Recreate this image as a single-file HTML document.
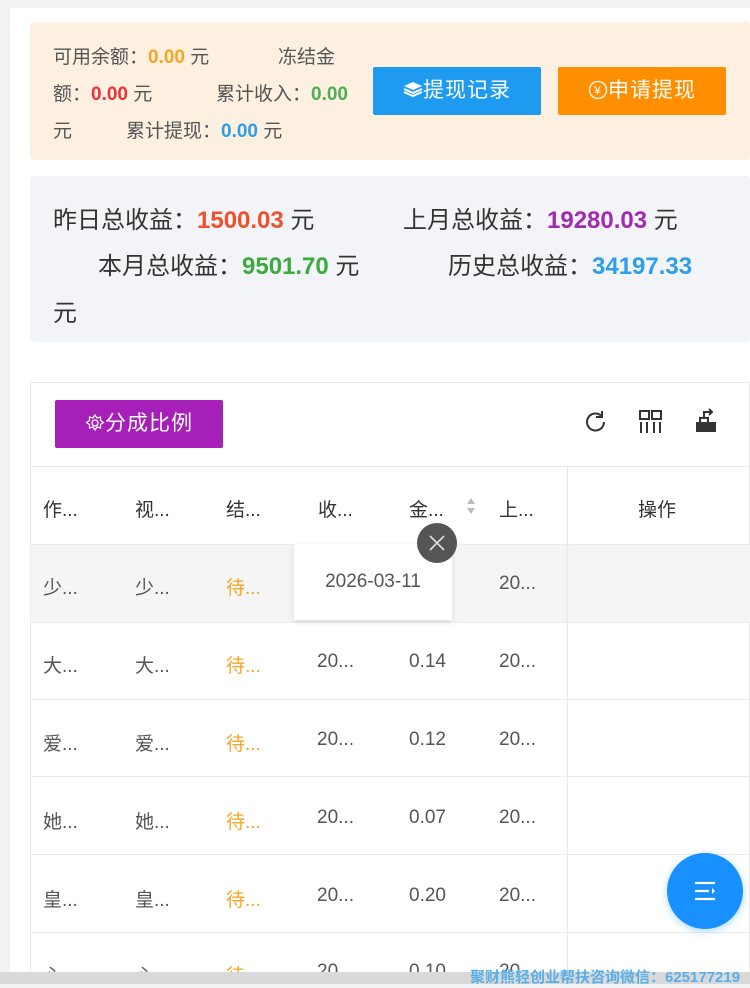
<!DOCTYPE html>
<html><head><meta charset="utf-8"><style>
*{margin:0;padding:0;box-sizing:border-box}
body{width:750px;height:984px;overflow:hidden;background:#f2f2f2;font-family:"Liberation Sans","Noto Sans CJK SC",sans-serif;position:relative;color:#333}
.a{position:absolute;white-space:nowrap}
.wrap{position:absolute;left:10px;top:8px;width:740px;height:976px;background:#fff}
.t{font-size:19px;color:#555}
.t span,.b span{font-weight:bold}
.b{font-size:24px;color:#333}
.c{font-size:19px;color:#555}
.h{font-size:19px;color:#333}
.o{color:#f5a623}
.line{position:absolute;left:32px;width:718px;height:1px;background:#ececec}
</style></head><body>
<div class="wrap"></div>
<div class="a" style="left:30px;top:22px;width:720px;height:138px;background:#fdf0e1;border-radius:4px"></div>
<div class="a t" style="left:53px;top:42px">可用余额：<span style="color:#f5a623">0.00</span> 元</div>
<div class="a t" style="left:278px;top:42px">冻结金</div>
<div class="a t" style="left:53px;top:79px">额：<span style="color:#e8333a">0.00</span> 元</div>
<div class="a t" style="left:216px;top:79px">累计收入：<span style="color:#4caf50">0.00</span></div>
<div class="a t" style="left:53px;top:116px">元</div>
<div class="a t" style="left:126px;top:116px">累计提现：<span style="color:#2d9ee8">0.00</span> 元</div>
<div class="a" style="left:373px;top:67px;width:168px;height:48px;background:#1e9bf0;color:#fff;font-size:21px;text-align:center;line-height:48px;border-radius:2px;letter-spacing:1px">
<svg width="20" height="18" viewBox="0 0 20 18" style="vertical-align:-2px"><path d="M10 1L19 5L10 9L1 5Z" fill="#fff"/><path d="M1 8L10 12L19 8M1 11L10 15L19 11" stroke="#fff" stroke-width="2" fill="none"/></svg>提现记录</div>
<div class="a" style="left:558px;top:67px;width:168px;height:48px;background:#ff8f00;color:#fff;font-size:21px;text-align:center;line-height:48px;border-radius:2px;letter-spacing:1px">
<svg width="20" height="20" viewBox="0 0 20 20" style="vertical-align:-3px"><circle cx="10" cy="10" r="8.5" stroke="#fff" stroke-width="1.3" fill="none"/><text x="10" y="14.5" font-size="12" text-anchor="middle" fill="#fff">¥</text></svg>申请提现</div>

<div class="a" style="left:30px;top:176px;width:720px;height:166px;background:#f3f4f8;border-radius:4px"></div>
<div class="a b" style="left:53px;top:200px">昨日总收益：<span style="color:#f0502c">1500.03</span> 元</div>
<div class="a b" style="left:403px;top:200px">上月总收益：<span style="color:#a12ab0">19280.03</span> 元</div>
<div class="a b" style="left:98px;top:246px">本月总收益：<span style="color:#3caa3c">9501.70</span> 元</div>
<div class="a b" style="left:448px;top:246px">历史总收益：<span style="color:#2d9ee8">34197.33</span></div>
<div class="a b" style="left:53px;top:293px">元</div>

<div class="a" style="left:30px;top:382px;width:720px;height:602px;border:1px solid #ececec;background:#fff"></div>
<div class="a" style="left:55px;top:400px;width:168px;height:48px;background:#a51fb8;color:#fff;font-size:21px;line-height:48px;text-align:center;border-radius:2px;letter-spacing:1px">
<svg width="20" height="20" viewBox="0 0 20 20" style="vertical-align:-3px"><circle cx="10" cy="10" r="3" stroke="#fff" stroke-width="1.3" fill="none"/><path d="M10 2l2 3 3.5-1 0 3.5 3 2-3 2 0 3.5-3.5-1-2 3-2-3-3.5 1 0-3.5-3-2 3-2 0-3.5 3.5 1z" stroke="#fff" stroke-width="1.2" fill="none"/></svg>分成比例</div>
<svg class="a" style="left:583px;top:409px" width="26" height="26" viewBox="0 0 26 26"><path d="M21 13a8.5 8.5 0 1 1-3-6.5" stroke="#333" stroke-width="2" fill="none"/><path d="M19 2v6h-6" stroke="#333" stroke-width="2" fill="none"/></svg>
<svg class="a" style="left:639px;top:410px" width="24" height="24" viewBox="0 0 24 24"><rect x="1" y="1" width="9" height="8" stroke="#333" stroke-width="2" fill="none"/><rect x="13" y="1" width="9" height="8" stroke="#333" stroke-width="2" fill="none"/><path d="M2 12v11M8 12v11M15 12v11M21 12v11" stroke="#333" stroke-width="2"/></svg>
<svg class="a" style="left:694px;top:408px" width="24" height="26" viewBox="0 0 24 26"><path d="M2 14h20v10H2z" fill="#333"/><path d="M6 14v-4h8v4" stroke="#333" stroke-width="2" fill="none"/><path d="M10 10V4h8M15 1l3 3-3 3" stroke="#333" stroke-width="2" fill="none"/></svg>

<div class="line" style="top:466px"></div>
<div class="a" style="left:31px;top:544px;width:537px;height:78px;background:#f5f5f5"></div>
<div class="a" style="left:568px;top:544px;width:182px;height:78px;background:#f5f5f5"></div>
<div class="a" style="left:567px;top:466px;width:1px;height:518px;background:#e8e8e8;box-shadow:-2px 0 4px rgba(0,0,0,.05)"></div>
<div class="line" style="top:544px"></div>
<div class="line" style="top:622px"></div>
<div class="line" style="top:699px"></div>
<div class="line" style="top:776px"></div>
<div class="line" style="top:854px"></div>
<div class="line" style="top:932px"></div>

<div class="a h" style="left:43px;top:495px">作...</div>
<div class="a h" style="left:135px;top:495px">视...</div>
<div class="a h" style="left:226px;top:495px">结...</div>
<div class="a h" style="left:318px;top:495px">收...</div>
<div class="a h" style="left:409px;top:495px">金...</div>
<svg class="a" style="left:466px;top:497px" width="10" height="18"><path d="M5 1L9 7H1Z M5 17L9 11H1Z" fill="#bbb"/></svg>
<div class="a h" style="left:499px;top:495px">上...</div>
<div class="a h" style="left:638px;top:495px">操作</div>

<div class="a c" style="left:43px;top:573px">少...</div><div class="a c" style="left:135px;top:573px">少...</div><div class="a c o" style="left:226px;top:573px">待...</div><div class="a c" style="left:499px;top:573px">20...</div>
<div class="a c" style="left:43px;top:651px">大...</div><div class="a c" style="left:135px;top:651px">大...</div><div class="a c o" style="left:226px;top:651px">待...</div><div class="a c" style="left:317px;top:651px">20...</div><div class="a c" style="left:409px;top:651px">0.14</div><div class="a c" style="left:499px;top:651px">20...</div>
<div class="a c" style="left:43px;top:729px">爱...</div><div class="a c" style="left:135px;top:729px">爱...</div><div class="a c o" style="left:226px;top:729px">待...</div><div class="a c" style="left:317px;top:729px">20...</div><div class="a c" style="left:409px;top:729px">0.12</div><div class="a c" style="left:499px;top:729px">20...</div>
<div class="a c" style="left:43px;top:807px">她...</div><div class="a c" style="left:135px;top:807px">她...</div><div class="a c o" style="left:226px;top:807px">待...</div><div class="a c" style="left:317px;top:807px">20...</div><div class="a c" style="left:409px;top:807px">0.07</div><div class="a c" style="left:499px;top:807px">20...</div>
<div class="a c" style="left:43px;top:885px">皇...</div><div class="a c" style="left:135px;top:885px">皇...</div><div class="a c o" style="left:226px;top:885px">待...</div><div class="a c" style="left:317px;top:885px">20...</div><div class="a c" style="left:409px;top:885px">0.20</div><div class="a c" style="left:499px;top:885px">20...</div>
<div class="a c" style="left:43px;top:961px">心...</div><div class="a c" style="left:135px;top:961px">心...</div><div class="a c o" style="left:226px;top:961px">待...</div><div class="a c" style="left:317px;top:961px">20...</div><div class="a c" style="left:409px;top:961px">0.10</div><div class="a c" style="left:499px;top:961px">20...</div>

<div class="a" style="left:294px;top:544px;width:158px;height:76px;background:#fff;box-shadow:0 2px 6px rgba(0,0,0,.12);font-size:19px;color:#555;text-align:center;line-height:76px">2026-03-11</div>
<div class="a" style="left:417px;top:523px;width:40px;height:40px;border-radius:50%;background:#555"></div>
<svg class="a" style="left:427px;top:533px" width="20" height="20"><path d="M3 3L17 17M17 3L3 17" stroke="#ddd" stroke-width="1.6"/></svg>

<div class="a" style="left:667px;top:853px;width:76px;height:76px;border-radius:50%;background:#1890ff;box-shadow:0 2px 8px rgba(24,144,255,.35)"></div>
<svg class="a" style="left:693px;top:879px" width="24" height="24"><path d="M2 4H22M2 12H16M2 20H22" stroke="#fff" stroke-width="2.2"/><path d="M19 9L22 12L19 15Z" fill="#fff"/></svg>

<div class="a" style="left:0;top:972px;width:750px;height:12px;background:#d9d9d9"></div>
<div class="a" style="left:470px;top:966px;font-size:15px;font-weight:bold;color:#5aaee8">聚财熊轻创业帮扶咨询微信：625177219</div>
</body></html>
